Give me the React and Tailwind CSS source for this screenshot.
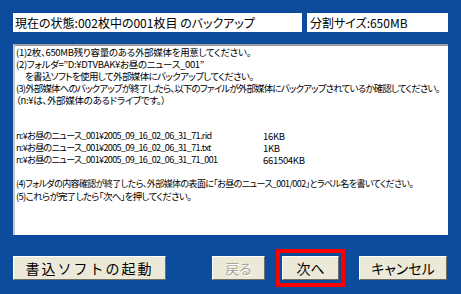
export default function App() {
  const files = [
    ["n:¥お昼のニュース_001¥2005_09_16_02_06_31_71.rid", "16KB"],
    ["n:¥お昼のニュース_001¥2005_09_16_02_06_31_71.txt", "1KB"],
    ["n:¥お昼のニュース_001¥2005_09_16_02_06_31_71_001", "661504KB"],
  ];
  const btn =
    "h-[24px] bg-[#ece9d8] border border-t-white border-l-white border-r-[#716f64] border-b-[#716f64] flex items-center justify-center text-[14px]";
  return (
    <div className="w-[461px] h-[294px] bg-[#0b4c9c] font-['Noto_Sans_CJK_JP',sans-serif] [font-feature-settings:'palt'] pt-[13px] pl-[13px] pr-[13px] flex flex-col">
      <div className="flex gap-[5px] h-[19px]">
        <div className="w-[289px] bg-white flex items-center pl-[2px] text-[12px] leading-none text-black whitespace-nowrap">
          現在の状態:002枚中の001枚目 のバックアップ
        </div>
        <div className="w-[141px] bg-white flex items-center pl-[3px] text-[12px] leading-none text-black whitespace-nowrap">
          分割サイズ:650MB
        </div>
      </div>
      <div className="mt-[12px] w-[435px] h-[191px] bg-white border-t-2 border-l-2 border-t-[#9d9d9d] border-l-[#c8c8c8] pl-[1px] text-[9.5px] leading-[12px] text-black tracking-[-0.3px] whitespace-nowrap overflow-hidden">
        <div>(1)2枚、650MB残り容量のある外部媒体を用意してください。</div>
        <div>(2)フォルダ=”D:¥DTVBAK¥お昼のニュース_001”</div>
        <div className="tracking-[-0.63px]">　を書込ソフトを使用して外部媒体にバックアップしてください。</div>
        <div className="tracking-[-0.85px]">(3)外部媒体へのバックアップが終了したら、以下のファイルが外部媒体にバックアップされているか確認してください。</div>
        <div>（n:¥は、外部媒体のあるドライブです。）</div>
        <div className="h-[12px]"></div>
        <div className="h-[12px]"></div>
        {files.map(([n, s]) => (
          <div key={n} className="flex">
            <div className="w-[247px] text-[9px] tracking-[-0.62px]">{n}</div>
            <div>{s}</div>
          </div>
        ))}
        <div className="h-[12px]"></div>
        <div className="text-[9px] tracking-[-0.6px]">(4)フォルダの内容確認が終了したら、外部媒体の表面に「お昼のニュース_001/002」とラベル名を書いてください。</div>
        <div className="tracking-[-0.7px]">(5)これらが完了したら「次へ」を押してください。</div>
      </div>
      <div className="mt-[21px] flex items-center">
        <div className={btn + " w-[153px] text-black tracking-[2px] [font-feature-settings:normal]"}>
          書込ソフトの起動
        </div>
        <div className={btn + " ml-[46px] w-[53px] text-[#aca899]"}>
          <span className="[text-shadow:1px_1px_0_#fff]">戻る</span>
        </div>
        <div className="relative ml-[17px]">
          <div className={btn + " w-[57px] text-black"}>次へ</div>
          <div className="absolute left-[-6px] top-[-7px] w-[69px] h-[38px] border-4 border-[#ff0000] pointer-events-none"></div>
        </div>
        <div className={btn + " ml-[20px] w-[88px] text-black"}>キャンセル</div>
      </div>
    </div>
  );
}
